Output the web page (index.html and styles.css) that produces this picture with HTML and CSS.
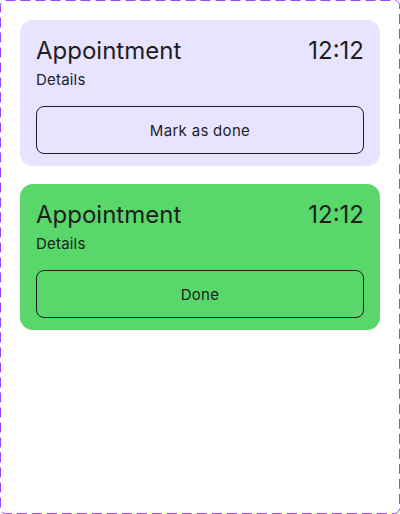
FILE: index.html
```html
<!DOCTYPE html>
<html lang="en">
<head>
<meta charset="utf-8">
<title>Appointments</title>
<link rel="stylesheet" href="styles.css">
</head>
<body>
<div class="frame">
  <svg class="frame-border" width="400" height="514" viewBox="0 0 400 514" aria-hidden="true">
    <rect x="0.5" y="0.5" width="399" height="513" rx="5" ry="5" fill="none" stroke="#9747FF" stroke-width="1" stroke-dasharray="10 5"/>
  </svg>
  <div class="card card-pending">
    <div class="card-head">
      <span class="card-title">Appointment</span>
      <span class="card-time">12:12</span>
    </div>
    <div class="card-details">Details</div>
    <button class="card-btn" type="button">Mark as done</button>
  </div>
  <div class="card card-done">
    <div class="card-head">
      <span class="card-title">Appointment</span>
      <span class="card-time">12:12</span>
    </div>
    <div class="card-details">Details</div>
    <button class="card-btn" type="button">Done</button>
  </div>
</div>
</body>
</html>
```
FILE: styles.css
```css
* { box-sizing: border-box; }
html, body { margin: 0; padding: 0; background: #fff; }
body {
  font-family: Inter, "Noto Sans", sans-serif;
  color: #1e1e1e;
}
.frame {
  position: relative;
  width: 400px;
  height: 514px;
  padding: 20px;
  display: flex;
  flex-direction: column;
  gap: 18px;
}
.frame-border {
  position: absolute;
  left: 0;
  top: 0;
  pointer-events: none;
}
.card {
  border-radius: 13px;
  padding: 16px 16px 12px;
  display: flex;
  flex-direction: column;
}
.card-pending { background: #e8e4ff; }
.card-done { background: #59d76a; }
.card-head {
  display: flex;
  justify-content: space-between;
  align-items: baseline;
}
.card-title, .card-time {
  font-size: 24px;
  line-height: 29px;
  font-weight: 400;
}
.card-details {
  margin-top: 6px;
  font-size: 15px;
  line-height: 17px;
  letter-spacing: 0.2px;
}
.card-btn {
  margin-top: 18px;
  height: 48px;
  width: 100%;
  border: 1.5px solid #1e1e1e;
  border-radius: 8px;
  background: transparent;
  font-family: Inter, "Noto Sans", sans-serif;
  font-size: 15px;
  letter-spacing: 0.3px;
  color: #1e1e1e;
  padding: 0;
}
```
